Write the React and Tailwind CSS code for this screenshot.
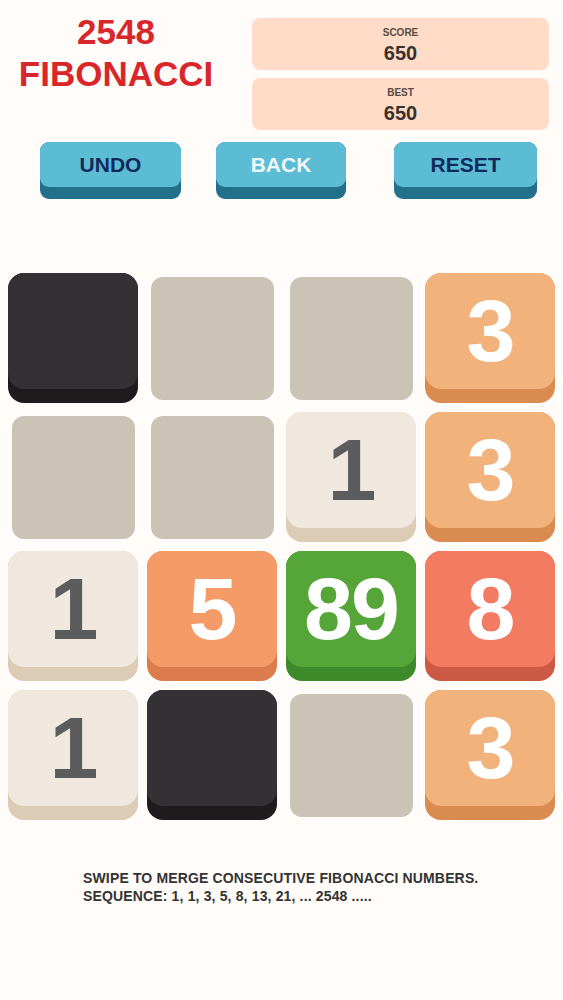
import React from "react";

const tiles = [
  [{ t: "dark" }, { t: "empty" }, { t: "empty" }, { t: "n3", v: "3" }],
  [{ t: "empty" }, { t: "empty" }, { t: "n1", v: "1" }, { t: "n3", v: "3" }],
  [{ t: "n1", v: "1" }, { t: "n5", v: "5" }, { t: "n89", v: "89" }, { t: "n8", v: "8" }],
  [{ t: "n1", v: "1" }, { t: "dark" }, { t: "empty" }, { t: "n3", v: "3" }],
];

const styles = {
  dark: { edge: "bg-[#1d1b1c]", face: "bg-[#333133]", text: "" },
  n1: { edge: "bg-[#dccbb5]", face: "bg-[#f0e7df]", text: "text-[#5c5c5c]" },
  n3: { edge: "bg-[#d98b50]", face: "bg-[#f1b27b]", text: "text-white" },
  n5: { edge: "bg-[#dc7b4c]", face: "bg-[#f49b68]", text: "text-white" },
  n89: { edge: "bg-[#3e8a2a]", face: "bg-[#56a538]", text: "text-white" },
  n8: { edge: "bg-[#cc5943]", face: "bg-[#f27b62]", text: "text-white" },
};

function Tile({ t, v }) {
  if (t === "empty") {
    return (
      <div className="h-[130px] flex items-center justify-center">
        <div className="w-[123px] h-[123px] rounded-[12px] bg-[#cbc3b5]" />
      </div>
    );
  }
  const s = styles[t];
  return (
    <div className={`h-[130px] rounded-[16px] pb-[14px] flex ${s.edge}`}>
      <div className={`flex-1 rounded-[16px] flex items-center justify-center ${s.face}`}>
        {v && (
          <span
            className={`font-bold text-[88px] leading-none tracking-[-2px] ${s.text}`}
            style={{ fontFamily: '"Liberation Sans", Arial, sans-serif' }}
          >
            {v}
          </span>
        )}
      </div>
    </div>
  );
}

function Btn({ label, w, ml, light }) {
  return (
    <div className={`${w} ${ml} h-[57px] rounded-[9px] bg-[#22708a] pb-[12px] flex`}>
      <div className="flex-1 rounded-[9px] bg-[#5bbcd4] flex items-center justify-center">
        <span
          className={`font-bold text-[21px] leading-none ${light ? "text-[#eef9fb]" : "text-[#11295b]"}`}
        >
          {label}
        </span>
      </div>
    </div>
  );
}

export default function App() {
  return (
    <div
      className="min-h-screen bg-[#fffcf9] overflow-hidden"
      style={{ fontFamily: '"Liberation Sans", Arial, sans-serif' }}
    >
      <div className="flex pt-[11px]">
        <div className="w-[232px] flex flex-col items-center text-[#d9262b] font-bold text-[35px] leading-[42px]">
          <div>2548</div>
          <div>FIBONACCI</div>
        </div>
        <div className="w-[297px] ml-[20px] mt-[7px] flex flex-col gap-[8px]">
          {[
            ["SCORE", "650"],
            ["BEST", "650"],
          ].map(([l, v]) => (
            <div key={l} className="h-[52px] rounded-[8px] bg-[#fedcc8] flex flex-col items-center pt-[9px] gap-[3px]">
              <div className="text-[10px] leading-[12px] font-bold text-[#5a4a41]">{l}</div>
              <div className="text-[20px] leading-[22px] font-bold text-[#3a302b]">{v}</div>
            </div>
          ))}
        </div>
      </div>

      <div className="flex pl-[40px] mt-[12px]">
        <Btn label="UNDO" w="w-[141px]" ml="" />
        <Btn label="BACK" w="w-[130px]" ml="ml-[35px]" light />
        <Btn label="RESET" w="w-[143px]" ml="ml-[48px]" />
      </div>

      <div className="mt-[74px] px-[8px] grid grid-cols-4 gap-[9px]">
        {tiles.flat().map((tl, i) => (
          <Tile key={i} {...tl} />
        ))}
      </div>

      <div className="mt-[49px] pl-[83px] text-[14px] leading-[18px] font-bold tracking-[0.15px] text-[#333333]">
        <div>SWIPE TO MERGE CONSECUTIVE FIBONACCI NUMBERS.</div>
        <div>SEQUENCE: 1, 1, 3, 5, 8, 13, 21, ... 2548 .....</div>
      </div>
    </div>
  );
}
